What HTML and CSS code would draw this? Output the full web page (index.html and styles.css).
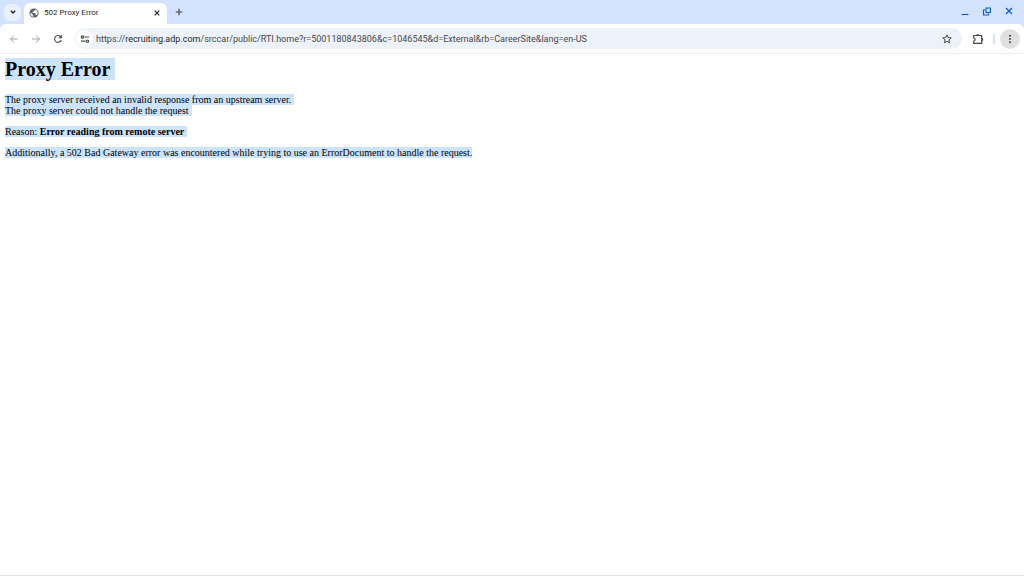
FILE: index.html
```html
<!DOCTYPE html>
<html lang="en">
<head>
    <meta charset="UTF-8">
    <meta name="viewport" content="width=device-width, initial-scale=1.0">
    <title>502 Proxy Error</title>
    <link rel="stylesheet" href="styles.css">
</head>
<body>
    <header class="browser">
        <div class="tab-strip">
            <button class="tab-search" aria-label="Search tabs">
                <svg width="8" height="8" viewBox="0 0 8 8"><path d="M1.800 2.800 4 5l2.200-2.200" fill="none" stroke="#1f1f1f" stroke-width="1.300"/></svg>
            </button>
            <div class="tab">
                <svg width="10" height="10" viewBox="0 0 24 24"><circle cx="12" cy="12" r="11" fill="#5f6368"/><path fill="#fff" d="M3.400 11l5.200 4.200v1.200c0 1.200 1 2.200 2.200 2.200v2.100A8.800 8.800 0 0 1 3.400 11zM18.400 17.900a2.200 2.200 0 0 0-2.100-1.500h-1.100v-3.300c0-.6-.5-1.100-1.100-1.100H8.600V9.800h1.200c.6 0 1.100-.5 1.100-1.100V6.500h2.200c1.200 0 2.200-1 2.200-2.200v-.5a8.800 8.800 0 0 1 3.100 14.100z"/></svg>
                <span class="tab-title">502 Proxy Error</span>
                <button aria-label="Close tab">
                    <svg width="8" height="8" viewBox="0 0 8 8"><path d="m1.700 1.700 4.600 4.600m0-4.600L1.700 6.300" stroke="#1f1f1f" stroke-width="1.200"/></svg>
                </button>
            </div>
            <button class="new-tab" aria-label="New tab">
                <svg width="8" height="8" viewBox="0 0 8 8"><path d="M4 .7v6.600M.7 4h6.600" stroke="#474747" stroke-width="1.200"/></svg>
            </button>
            <div class="window-buttons">
                <button aria-label="Minimize">
                    <svg width="10" height="10" viewBox="0 0 10 10"><path d="M1.500 7.500h7" stroke="#0b57d0" stroke-width="1.100"/></svg>
                </button>
                <button aria-label="Restore">
                    <svg width="10" height="10" viewBox="0 0 10 10"><path d="M4 1h4.500v4.500H4zM3 3H1.500v5H6.500V6.500" fill="none" stroke="#0b57d0" stroke-width="1.100"/></svg>
                </button>
                <button aria-label="Close window">
                    <svg width="10" height="10" viewBox="0 0 10 10"><path d="m2 1 6 6m0-6-6 6" stroke="#0b57d0" stroke-width="1.200"/></svg>
                </button>
            </div>
        </div>
        <div class="toolbar">
            <button class="nav-button" aria-label="Back" disabled>
                <svg width="10" height="10" viewBox="0 0 10 10"><path d="M8.500 5H1.500M5 1.500 1.500 5 5 8.500" fill="none" stroke="#a0a0a0"/></svg>
            </button>
            <button class="nav-button" aria-label="Forward" disabled>
                <svg width="10" height="10" viewBox="0 0 10 10"><path d="M1 5h7.500M5 1.500 8.500 5 5 8.500" fill="none" stroke="#a0a0a0"/></svg>
            </button>
            <button class="nav-button" aria-label="Reload">
                <svg width="10" height="10" viewBox="0 0 10 10"><path d="M8.200 6A3.400 3.400 0 1 1 7.500 2.700L8.300 3.500" fill="none" stroke="#474747" stroke-width="1.100"/><path d="M8.900 1v3.300H5.600V3.200h2.200V1z" fill="#474747"/></svg>
            </button>
            <div class="address-bar">
                <button class="site-info" aria-label="View site information">
                    <svg width="10" height="10" viewBox="0 0 10 10"><path d="M4.600 3H9M1 7.200h4.400" stroke="#474747" stroke-width="1.200"/><circle cx="2.500" cy="3" r="1.200" fill="none" stroke="#474747" stroke-width="1.200"/><circle cx="7.500" cy="7.200" r="1.200" fill="none" stroke="#474747" stroke-width="1.200"/></svg>
                </button>
                <a class="url" href="#">https://<span class="host">recruiting.adp.com</span>/srccar/public/RTI.home?r=5001180843806&amp;c=1046545&amp;d=External&amp;rb=CareerSite&amp;lang=en-US</a>
                <button aria-label="Bookmark this tab">
                    <svg width="10" height="10" viewBox="0 0 10 10"><path d="m5 .9 1.200 2.700 3 .3-2.250 2 .65 2.900L5 7.300 2.400 8.800l.65-2.900L.8 3.900l3-.3z" fill="none" stroke="#474747"/></svg>
                </button>
            </div>
            <button class="extensions" aria-label="Extensions">
                <svg width="12" height="12" viewBox="0 0 12 12"><path d="M1.700 2.500h8v7.900h-8V8.100c1.900-.2 1.900-3 0-3.200z" fill="none" stroke="#474747" stroke-width="1.200" stroke-linejoin="round"/><path d="M4.200 2.500a1.500 1.500 0 0 1 3 0zM9.700 4.900a1.500 1.500 0 0 1 0 3z" fill="#474747"/></svg>
            </button>
            <span class="divider"></span>
            <button class="menu" aria-label="Customize and control">
                <svg width="10" height="10" viewBox="0 0 10 10" fill="#474747"><circle cx="5" cy="1.700" r="1"/><circle cx="5" cy="5" r="1"/><circle cx="5" cy="8.300" r="1"/></svg>
            </button>
        </div>
    </header>
    <main class="page">
        <h1><mark class="line-end">Proxy Error</mark></h1>
        <p><mark class="line-end">The proxy server received an invalid response from an upstream server.</mark><br>
        <mark class="line-end">The proxy server could not handle the request</mark></p>
        <p><mark class="line-end">Reason: <strong>Error reading from remote server</strong></mark></p>
        <p><mark>Additionally, a 502 Bad Gateway error was encountered while trying to use an ErrorDocument to handle the request.</mark></p>
    </main>
</body>
</html>
```

FILE: styles.css
```css
* {
    box-sizing: border-box;
}
body {
    margin: 0;
    min-height: 100vh;
    display: flex;
    flex-direction: column;
    background: #fefefe;
    border-bottom: 1px solid #e4e4e4;
}
button {
    display: flex;
    align-items: center;
    justify-content: center;
    flex-shrink: 0;
    padding: 0;
    border: none;
    background: none;
}
.browser {
    font-family: Roboto, sans-serif;
    background: #d3e3fd;
}
.tab-strip {
    display: flex;
    align-items: center;
    height: 24px;
    padding: 0 7px 0 4px;
}
.tab-search {
    width: 17px;
    height: 17px;
    border-radius: 6px;
    background: #e9f1fe;
}
.tab {
    display: flex;
    align-items: center;
    align-self: flex-end;
    width: 143px;
    height: 21px;
    margin-left: 3px;
    padding: 0 6px 2px 5px;
    border-radius: 6px 6px 0 0;
    background: white;
}
.tab-title {
    flex: 1;
    margin-left: 5px;
    font-size: 8px;
    color: #1f1f1f;
}
.new-tab {
    width: 16px;
    height: 16px;
    margin-left: 4px;
}
.window-buttons {
    display: flex;
    gap: 12px;
    margin-left: auto;
    padding-right: 3px;
}
.toolbar {
    display: flex;
    align-items: center;
    height: 30px;
    padding: 0 4px 0 9px;
    border-bottom: 1px solid #ececec;
    border-radius: 6px 6px 0 0;
    background: white;
}
.nav-button {
    width: 10px;
    height: 10px;
    margin-right: 12px;
}
.address-bar {
    display: flex;
    align-items: center;
    flex: 1;
    height: 21px;
    padding: 0 10px 0 1px;
    border-radius: 11px;
    background: #edf2fa;
}
.site-info {
    width: 17px;
    height: 17px;
    border-radius: 50%;
    background: white;
}
.url {
    flex: 1;
    margin-left: 3px;
    font-size: 9px;
    color: #474747;
    text-decoration: none;
    white-space: nowrap;
}
.host {
    color: #1f1f1f;
}
.extensions {
    margin-left: 10px;
}
.divider {
    width: 2px;
    height: 10px;
    margin: 0 5px 0 9px;
    background: #d3e3fd;
}
.menu {
    width: 20px;
    height: 20px;
    border-radius: 50%;
    background: #e0e0e0;
}
.page {
    flex: 1;
    padding: 4px 5px;
    font-family: "Liberation Serif", serif;
    font-size: 10px;
    line-height: 11px;
    color: black;
}
.page h1 {
    margin: 0 0 13px;
    font-size: 20px;
    line-height: 23px;
}
.page p {
    margin: 0 0 10px;
}
.page mark {
    background: #cce3fc;
    color: black;
}
.line-end {
    padding-right: 3px;
}
h1 .line-end {
    padding-right: 5px;
}
```
